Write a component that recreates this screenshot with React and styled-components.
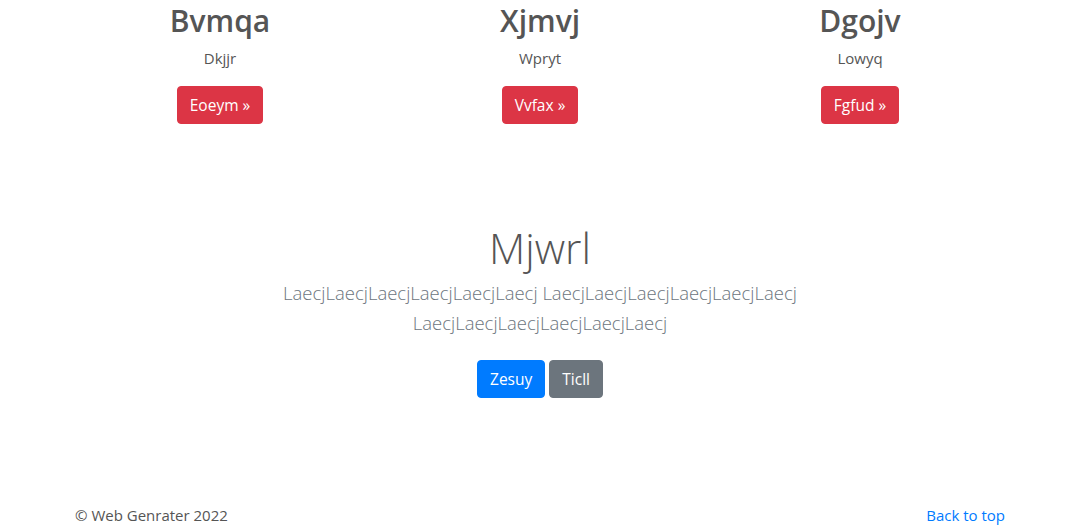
import React from 'react';
import styled, { createGlobalStyle } from 'styled-components';

const GlobalStyle = createGlobalStyle`
  *, *::before, *::after { box-sizing: border-box; }
  body {
    margin: 0;
    font-family: "Open Sans", "Noto Sans", sans-serif;
    font-size: 15px;
    line-height: 1.5;
    color: #555;
    background: #fff;
  }
`;

const features = [
  { title: 'Bvmqa', text: 'Dkjjr', action: 'Eoeym' },
  { title: 'Xjmvj', text: 'Wpryt', action: 'Vvfax' },
  { title: 'Dgojv', text: 'Lowyq', action: 'Fgfud' },
];

const App = () => {
  return <Page>
    <GlobalStyle />
    <Container>
      <FeatureRow>
        {features.map((f) => (
          <Feature key={f.title}>
            <h2>{f.title}</h2>
            <p>{f.text}</p>
            <p><Button $variant="danger">{f.action} &raquo;</Button></p>
          </Feature>
        ))}
      </FeatureRow>
    </Container>

    <Hero>
      <HeroInner>
        <h1>Mjwrl</h1>
        <Lead>LaecjLaecjLaecjLaecjLaecjLaecj LaecjLaecjLaecjLaecjLaecjLaecj LaecjLaecjLaecjLaecjLaecjLaecj</Lead>
        <Actions>
          <Button $variant="primary">Zesuy</Button>
          <Button $variant="secondary">Ticll</Button>
        </Actions>
      </HeroInner>
    </Hero>

    <Footer>
      <span>© Web Genrater 2022</span>
      <a href="#">Back to top</a>
    </Footer>
  </Page>
}

const colors = {
  danger: '#dc3545',
  primary: '#007bff',
  secondary: '#6c757d',
};

const Page = styled.div`
  min-height: 100vh;
  display: flex;
  flex-direction: column;
`

const Container = styled.div`
  width: 960px;
  margin: 0 auto;
  padding: 3px 15px 0;
`

const FeatureRow = styled.div`
  display: grid;
  grid-template-columns: repeat(3, 1fr);
  margin: 0 -15px;
`

const Feature = styled.div`
  text-align: center;
  padding: 0 15px;
  h2{
    margin: 0 0 7px;
    font-size: 30px;
    font-weight: 600;
    line-height: 1.2;
    color: #555;
  }
  p{
    margin: 0 0 16px;
    line-height: 24px;
  }
`

const Button = styled.a`
  display: inline-block;
  padding: 6px 12px;
  font-size: 15.5px;
  line-height: 24px;
  border-radius: 4px;
  color: #fff;
  text-decoration: none;
  background-color: ${({ $variant }) => colors[$variant]};
  border: 1px solid ${({ $variant }) => colors[$variant]};
`

const Hero = styled.section`
  padding: 83px 0 0;
  text-align: center;
`

const HeroInner = styled.div`
  max-width: 640px;
  margin: 0 auto;
  padding: 0 15px;
  h1{
    margin: 0 0 5px;
    font-size: 42px;
    font-weight: 300;
    line-height: 1.2;
    color: #555;
  }
`

const Lead = styled.p`
  margin: 0 0 14px;
  font-size: 18.5px;
  line-height: 30px;
  font-weight: 300;
  color: #6c757d;
`

const Actions = styled.p`
  margin: 0;
  display: flex;
  justify-content: center;
  gap: 4px;
  a{ margin: 8px 0; }
`

const Footer = styled.footer`
  margin-top: auto;
  width: 960px;
  margin-left: auto;
  margin-right: auto;
  padding: 0 15px;
  display: flex;
  justify-content: space-between;
  align-items: center;
  height: 26px;
  position: relative;
  top: 2px;
  a{
    color: #007bff;
    text-decoration: none;
  }
`

export default App
